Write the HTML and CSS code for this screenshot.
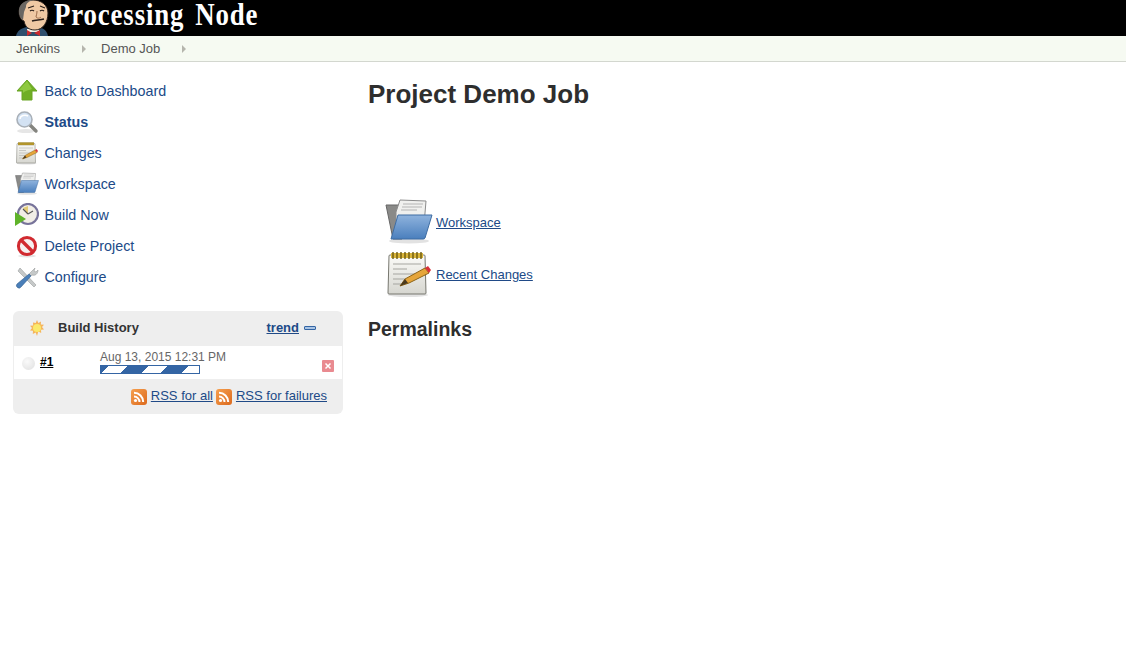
FILE: index.html
```html
<!DOCTYPE html>
<html lang="en">
<head>
  <meta charset="UTF-8" />
  <title>Demo Job [Processing Node]</title>
  <link rel="stylesheet" href="styles.css">
</head>
<body>
  <svg class="defs" width="0" height="0">
    <defs>
      <linearGradient id="folderBlue" x1="0" y1="0" x2="0" y2="1">
        <stop offset="0" stop-color="#8fb3dd" />
        <stop offset="1" stop-color="#4a7fbd" />
      </linearGradient>
      <linearGradient id="paper" x1="0" y1="0" x2="0" y2="1">
        <stop offset="0" stop-color="#fbfbf8" />
        <stop offset="1" stop-color="#d6d6d0" />
      </linearGradient>
      <linearGradient id="rssOrange" x1="0" y1="0" x2="1" y2="1">
        <stop offset="0" stop-color="#f6a04f" />
        <stop offset="1" stop-color="#dc6a1e" />
      </linearGradient>
      <symbol id="folder" viewBox="0 0 48 48">
        <ellipse cx="24" cy="43" rx="20" ry="2.5" fill="#e2e2e2" />
        <path d="M1 7h14l2-2v36H8z" fill="#8a8a88" stroke="#666" />
        <path d="M11 14 15 2l26 1-2 24H11z" fill="#f0f0ee" stroke="#8c8c8c" />
        <path d="M18 6h20M17 9h20M16 12h16" stroke="#b4b4b4" fill="none" />
        <path d="M13 17h34l-7 23a2 2 0 0 1-2 1H6z" fill="url(#folderBlue)" stroke="#3f6da3" />
      </symbol>
      <symbol id="notepad" viewBox="0 0 48 48">
        <ellipse cx="23" cy="45" rx="20" ry="2" fill="#e2e2e2" />
        <path d="M5 5h34a1 1 0 0 1 1 1l1 37a1 1 0 0 1-1 1H4a1 1 0 0 1-1-1L4 6a1 1 0 0 1 1-1z" fill="url(#paper)" stroke="#77776f" />
        <path d="M6 3h32v5H6z" fill="#d9b53a" />
        <path d="M8 2v7M12 2v7M16 2v7M20 2v7M24 2v7M28 2v7M32 2v7M36 2v7" stroke="#6b5a12" stroke-width="1.4" fill="none" />
        <path d="M8 14h28M8 19h14M8 24h22M8 29h12M8 34h8" stroke="#a5a5a0" fill="none" />
        <path d="M15 36 20 29 40 18 44 23 24 33z" fill="#e5a53a" stroke="#8d6418" />
        <path d="M15 36 20 29 23 33z" fill="#4a3a20" />
        <path d="M40 18 43 16 46 20 44 23z" fill="#d8313a" />
      </symbol>
    </defs>
  </svg>

  <header class="top-bar">
    <svg class="logo" width="34" height="36" viewBox="0 0 34 36">
      <path d="M1 36c1-5 5-8 11-9l11 0c6 1 9 4 10 9z" fill="#2f4f6d" />
      <path d="M12 29h12v3H12z" fill="#f4f0e8" />
      <path d="M17 33l-5-3v6zM19 33l6-3v6z" fill="#cc2a2e" />
      <path d="M4 12C4 5 10 0 18 0c8 0 15 5 15 13 0 9-5 17-13 17-6 0-10-3-11-9-3-1-5-5-5-9z" fill="#efc9a4" stroke="#2b211c" />
      <path d="M4 12C3 5 10-1 19 0c-5 1-8 3-8 7l-2 5-1 8C5 18 4 15 4 12z" fill="#6a6763" />
      <path d="M15 11c1-1 3-1 4 0M25 11c1-1 3-1 4 0M13 8l6-2M25 6l5 2" stroke="#2b211c" stroke-width="1.2" fill="none" />
      <path d="M22 11c0 3-1 5-1 6 2 2 4 1 5 0" stroke="#9a6a48" fill="none" />
      <path d="M17 21c3-1 8-1 12-2" stroke="#2b211c" stroke-width="1.4" fill="none" />
    </svg>
    <span class="brand">Processing Node</span>
  </header>

  <nav class="crumbs">
    <a class="crumb" href="#">Jenkins</a>
    <span class="crumb-arrow"></span>
    <a class="crumb" href="#">Demo Job</a>
    <span class="crumb-arrow"></span>
  </nav>

  <div class="layout">
    <aside class="side">
      <ul class="tasks">
        <li class="task">
          <svg class="task-icon" viewBox="0 0 24 24">
            <path d="M12 1 22 12h-5v9H7v-9H2z" fill="#6fae24" stroke="#6aa525" />
            <path d="M12 2 4 11h4v3c3-3 7-3 9-4z" fill="#8fc940" />
          </svg>
          <a href="#">Back to Dashboard</a>
        </li>
        <li class="task">
          <svg class="task-icon" viewBox="0 0 24 24">
            <ellipse cx="11" cy="21" rx="9" ry="2" fill="#e6e6e6" />
            <path d="M14 14l7 7" stroke="#84847f" stroke-width="3.400" stroke-linecap="round" />
            <circle cx="9.500" cy="9.500" r="7.500" fill="#d3e2f3" stroke="#a9b0b8" stroke-width="1.600" />
            <path d="M5 9a5 4 0 0 1 8-3" stroke="#fff" stroke-width="1.500" fill="none" />
          </svg>
          <a class="current" href="#">Status</a>
        </li>
        <li class="task">
          <svg class="task-icon"><use href="#notepad" /></svg>
          <a href="#">Changes</a>
        </li>
        <li class="task">
          <svg class="task-icon"><use href="#folder" /></svg>
          <a href="#">Workspace</a>
        </li>
        <li class="task">
          <svg class="task-icon" viewBox="0 0 24 24">
            <circle cx="13" cy="11" r="10" fill="#f1eee6" stroke="#77739a" stroke-width="2.200" />
            <path d="M13 11 8 5l5-2z" fill="#e3cb74" />
            <path d="M13 11 8 6M13 11l5-3" stroke="#555" stroke-width="1.100" />
            <path d="M0 9l11 7-11 7z" fill="#5fb32a" />
          </svg>
          <a href="#">Build Now</a>
        </li>
        <li class="task">
          <svg class="task-icon" viewBox="0 0 24 24">
            <ellipse cx="12" cy="22" rx="9" ry="1.500" fill="#e4e4e4" />
            <circle cx="12" cy="12" r="8.600" fill="#f6f0f0" stroke="#d12a30" stroke-width="3" />
            <path d="M6 6l12 12" stroke="#d12a30" stroke-width="3.400" />
          </svg>
          <a href="#">Delete Project</a>
        </li>
        <li class="task">
          <svg class="task-icon" viewBox="0 0 24 24">
            <path d="M5 3l16 17-2 2L3 6z" fill="#c6c9c9" stroke="#9a9d9d" stroke-width=".6" />
            <path d="M14 9 20 3l-1 3 2 1 2-2c0 4-3 6-6 5l-1 1z" fill="#c6c9c9" stroke="#9a9d9d" stroke-width=".6" />
            <path d="M14 9l2 2-10 11a2 2 0 0 1-4-3z" fill="#4a7fb9" stroke="#33608f" stroke-width=".6" />
          </svg>
          <a href="#">Configure</a>
        </li>
      </ul>

      <section class="history">
        <div class="history-head">
          <svg class="sun" viewBox="0 0 16 16">
            <path d="M8 0l1.300 3 2.700-1.600-.2 3 3.200.4-2 2.200 2 2.400-3 .4.2 3.200-2.900-1.400L8 16l-1.300-3.400-2.900 1.400.2-3.200-3-.4 2-2.400-2-2.200 3.200-.4-.2-3L6.700 3z" fill="#f5b55a" />
            <circle cx="8" cy="8" r="4" fill="#fbe96a" />
          </svg>
          <span class="history-title">Build History</span>
          <a class="trend" href="#">trend</a>
          <span class="collapse"></span>
        </div>
        <div class="history-row">
          <span class="ball"></span>
          <a class="build-no" href="#">#1</a>
          <div class="build-info">
            <div class="build-date">Aug 13, 2015 12:31 PM</div>
            <div class="progress"></div>
          </div>
          <span class="stop">
            <svg viewBox="0 0 12 12" width="12" height="12">
              <rect width="12" height="12" rx="1" fill="#e98a90" />
              <path d="M3.500 3.500l5 5M8.500 3.500l-5 5" stroke="#fff" stroke-width="1.500" />
            </svg>
          </span>
        </div>
        <div class="history-foot">
          <svg class="rss" viewBox="0 0 16 16">
            <rect width="16" height="16" rx="3" fill="url(#rssOrange)" />
            <circle cx="4.500" cy="11.500" r="1.600" fill="#fff" />
            <path d="M3 7.500a5.500 5.500 0 0 1 5.500 5.500M3 3.800A9.200 9.200 0 0 1 12.200 13" stroke="#fff" stroke-width="2" fill="none" />
          </svg>
          <a href="#">RSS for all</a>
          <svg class="rss" viewBox="0 0 16 16">
            <rect width="16" height="16" rx="3" fill="url(#rssOrange)" />
            <circle cx="4.500" cy="11.500" r="1.600" fill="#fff" />
            <path d="M3 7.500a5.500 5.500 0 0 1 5.500 5.500M3 3.800A9.200 9.200 0 0 1 12.200 13" stroke="#fff" stroke-width="2" fill="none" />
          </svg>
          <a href="#">RSS for failures</a>
        </div>
      </section>
    </aside>

    <main class="content">
      <h1>Project Demo Job</h1>
      <div class="links">
        <div class="link-row">
          <svg class="link-icon"><use href="#folder" /></svg>
          <a href="#">Workspace</a>
        </div>
        <div class="link-row">
          <svg class="link-icon"><use href="#notepad" /></svg>
          <a href="#">Recent Changes</a>
        </div>
      </div>
      <h2>Permalinks</h2>
    </main>
  </div>
</body>
</html>
```

FILE: styles.css
```css
html, body {
  margin: 0;
  padding: 0;
}

body {
  font-family: "Liberation Sans", Arial, sans-serif;
  font-size: 13px;
  color: #333;
  background-color: #fff;
}

a {
  color: #204a87;
}

.defs {
  position: absolute;
}

.top-bar {
  height: 36px;
  background-color: #000;
  display: flex;
  align-items: flex-start;
  padding-left: 15px;
}

.logo {
  flex: none;
}

.brand {
  margin-left: 5px;
  color: #fff;
  font-family: "Liberation Serif", serif;
  font-weight: bold;
  font-size: 32px;
  line-height: 28px;
  letter-spacing: 1px;
  word-spacing: 4px;
  white-space: nowrap;
  transform: scaleX(.84);
  transform-origin: left top;
}

.crumbs {
  height: 25px;
  background-color: #f6faf2;
  border-bottom: 1px solid #d3d7cf;
  display: flex;
  align-items: center;
  padding-left: 16px;
}

.crumb {
  color: #555;
  text-decoration: none;
}

.crumb-arrow {
  width: 0;
  height: 0;
  margin: 1px 15px 0 22px;
  border-left: 4px solid #b5b5ad;
  border-top: 4px solid transparent;
  border-bottom: 4px solid transparent;
}

.layout {
  display: flex;
}

.side {
  width: 330px;
  margin-left: 13px;
  flex: none;
}

.tasks {
  list-style: none;
  margin: 13px 0 0;
  padding: 0;
}

.task {
  height: 31px;
  display: flex;
  align-items: center;
  padding-left: 2px;
  font-size: 14.3px;
}

.task a {
  color: #204a87;
  text-decoration: none;
}

.task a.current {
  font-weight: bold;
}

.task-icon {
  width: 24px;
  height: 24px;
  margin-right: 5.5px;
  flex: none;
}

.history {
  margin-top: 19px;
  background-color: #eee;
  border-radius: 6px;
  padding: 0 1px;
}

.history-head {
  height: 34px;
  box-sizing: border-box;
  padding: 0 0 2px 16px;
  display: flex;
  align-items: center;
}

.sun {
  width: 16px;
  height: 16px;
  margin-top: 2px;
  margin-left: -1px;
}

.history-title {
  margin-left: 13px;
  font-weight: bold;
}

.trend {
  margin-left: auto;
  font-weight: bold;
}

.collapse {
  width: 10px;
  height: 2px;
  margin: 2px 26px 0 5px;
  background-color: #a9c4e4;
  border: 1px solid #3465a4;
  border-radius: 1px;
}

.history-row {
  height: 33px;
  margin-top: 1px;
  background-color: #fff;
  display: flex;
  align-items: flex-start;
  font-size: 12px;
}

.ball {
  width: 13px;
  height: 13px;
  margin: 11px 0 0 8px;
  border-radius: 50%;
  background: radial-gradient(circle at 40% 35%, #fafafa, #dedede);
}

.build-no {
  margin: 9px 0 0 5px;
  width: 60px;
  font-weight: bold;
  color: #000;
}

.build-date {
  margin-top: 4px;
  color: #666;
  line-height: 15px;
}

.build-info {
  width: 222px;
}

.progress {
  width: 98px;
  height: 7px;
  border: 1px solid #3465a4;
  background: repeating-linear-gradient(135deg, #3465a4 0, #3465a4 5.6px, #fff 5.6px, #fff 18.4px, #3465a4 18.4px, #3465a4 28.3px);
}

.stop {
  margin-top: 14px;
  display: block;
  height: 12px;
}

.history-foot {
  height: 34px;
  margin-top: 1px;
  padding-bottom: 3px;
  box-sizing: border-box;
  display: flex;
  align-items: center;
  justify-content: flex-end;
  padding-right: 15px;
}

.rss {
  width: 16px;
  height: 16px;
  margin: 2px 4px 0 3px;
}

.content {
  margin-left: 25px;
  flex: 1;
}

h1 {
  margin: 16px 0 0;
  font-size: 26px;
  line-height: 32px;
  color: #2e2e2e;
}

.links {
  margin: 86px 0 0 17px;
}

.link-row {
  height: 52px;
  display: flex;
  align-items: center;
}

.link-icon {
  width: 48px;
  height: 48px;
  margin-right: 3px;
}

h2 {
  margin: 17px 0 0;
  font-size: 19.5px;
  line-height: 24px;
  color: #2e2e2e;
}
```
